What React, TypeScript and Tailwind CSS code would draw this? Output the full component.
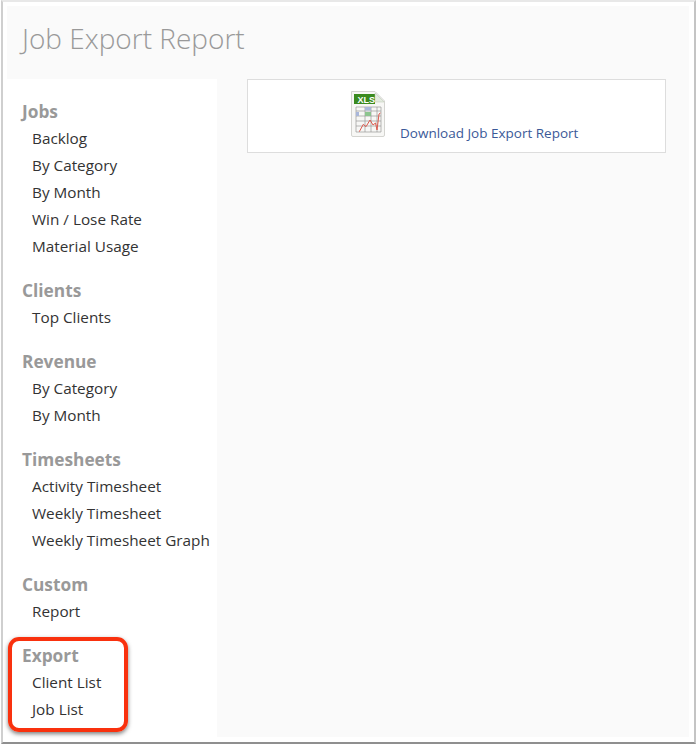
const groups: { title: string; items: string[] }[] = [
  { title: "Jobs", items: ["Backlog", "By Category", "By Month", "Win / Lose Rate", "Material Usage"] },
  { title: "Clients", items: ["Top Clients"] },
  { title: "Revenue", items: ["By Category", "By Month"] },
  { title: "Timesheets", items: ["Activity Timesheet", "Weekly Timesheet", "Weekly Timesheet Graph"] },
  { title: "Custom", items: ["Report"] },
  { title: "Export", items: ["Client List", "Job List"] },
];

function XlsIcon() {
  return (
    <svg width="36" height="48" viewBox="0 0 36 48" className="shrink-0">
      <path d="M1.5 1.5H25L34.5 11V45a1.5 1.5 0 0 1-1.5 1.5H3A1.5 1.5 0 0 1 1.5 45Z" fill="#f7f7f5" stroke="#d4d4d0" />
      <path d="M4 4H25V14H4Z" fill="#3a8a1e" />
      <path d="M25 3L34 12H25Z" fill="#e4ebe0" stroke="#b8c4b0" strokeWidth="0.5" />
      <text x="7.5" y="12.5" fontSize="9" fontWeight="700" fill="#ffffff" fontFamily="'Liberation Sans', sans-serif">XLS</text>
      <g stroke="#9a9a9a" strokeWidth="0.7" fill="none">
        <path d="M6 17H31V42H6Z" />
        <path d="M6 21H31M6 26H31M6 31H31M6 36H31M15 17V42M21 17V42M27 17V42" />
      </g>
      <rect x="15" y="17" width="6" height="3.5" fill="#a9b7da" />
      <rect x="15" y="22" width="6" height="4" fill="#8cc48e" />
      <rect x="6" y="22" width="3" height="4" fill="#a9b7da" />
      <path d="M9.3 41.7L13.3 34.3L16 36.7L20 30L23 35L25.5 33L27 40L29 24L30.5 23" fill="none" stroke="#dd5a4e" strokeWidth="1" />
    </svg>
  );
}

export default function App() {
  return (
    <div className="w-[696px] h-[745px] bg-white font-['Open_Sans',sans-serif] overflow-hidden relative pl-px">
      <div className="w-[695px] h-[744px] border-2 border-t-[#e8e8e8] border-r-[#c4c4c4] border-l-[#cfcfcf] border-b-[#8f8f8f] pl-[4px] pr-[5px] pt-[4px] pb-[5px]">
        <div className="h-full flex flex-col bg-[#fafafa]">
          <h1 className="h-[73px] pl-[15px] pt-[13px] text-[28px] leading-[38px] font-light text-[#999999]">
            Job Export Report
          </h1>
          <div className="flex flex-1 min-h-0">
            <nav className="w-[210px] bg-white pl-[15px] pt-[19px]">
              {groups.map((g) => (
                <div key={g.title} className="mb-[16px]">
                  <div className="h-[28px] text-[17.3px] leading-[28px] font-bold text-[#999999]">{g.title}</div>
                  {g.items.map((item) => (
                    <div key={item} className="h-[27px] pl-[10px] text-[15.3px] leading-[25px] text-[#333333] whitespace-nowrap">
                      {item}
                    </div>
                  ))}
                </div>
              ))}
            </nav>
            <div className="flex-1 pl-[30px] pr-[23px]">
              <div className="h-[74px] bg-white border border-[#dddddd] pl-[102px] pt-[10px] flex items-start">
                <XlsIcon />
                <a className="ml-[14px] mt-[33px] text-[13.5px] leading-[20px] text-[#3b5998] whitespace-nowrap">
                  Download Job Export Report
                </a>
              </div>
            </div>
          </div>
        </div>
      </div>
      <div className="absolute left-[8px] top-[637px] w-[120px] h-[95px] border-[4px] border-[#f9310e] rounded-[11px] shadow-[0_2px_4px_rgba(0,0,0,0.5)]" />
    </div>
  );
}
